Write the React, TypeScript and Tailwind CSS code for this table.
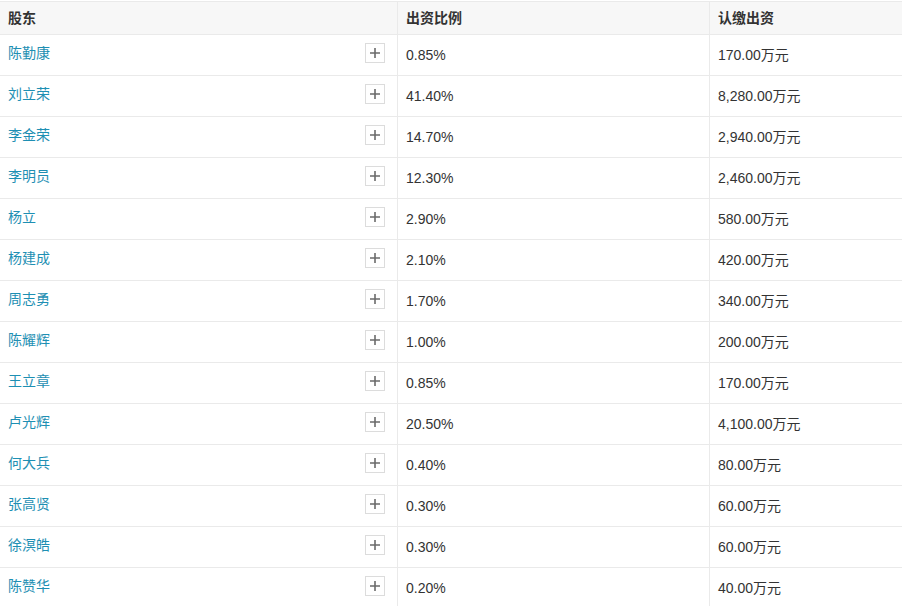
import React from "react";

const rows: [string, string, string][] = [
  ["陈勤康", "0.85%", "170.00万元"],
  ["刘立荣", "41.40%", "8,280.00万元"],
  ["李金荣", "14.70%", "2,940.00万元"],
  ["李明员", "12.30%", "2,460.00万元"],
  ["杨立", "2.90%", "580.00万元"],
  ["杨建成", "2.10%", "420.00万元"],
  ["周志勇", "1.70%", "340.00万元"],
  ["陈耀辉", "1.00%", "200.00万元"],
  ["王立章", "0.85%", "170.00万元"],
  ["卢光辉", "20.50%", "4,100.00万元"],
  ["何大兵", "0.40%", "80.00万元"],
  ["张高贤", "0.30%", "60.00万元"],
  ["徐溟皓", "0.30%", "60.00万元"],
  ["陈赞华", "0.20%", "40.00万元"],
];

const font = { fontFamily: '"Liberation Sans", "Noto Sans CJK SC", sans-serif' };

function PlusBox() {
  return (
    <div className="w-5 h-5 border border-[#dcdcdc] bg-white flex items-center justify-center">
      <svg width="12" height="12" viewBox="0 0 12 12">
        <path d="M6 1v10M1 6h10" stroke="#6b6b6b" strokeWidth="1.6" />
      </svg>
    </div>
  );
}

export default function App() {
  return (
    <div className="w-[902px] h-[606px] bg-white overflow-hidden pt-px text-[14px] text-[#333]" style={font}>
      <div className="grid grid-cols-[398px_312px_1fr] h-[34px] bg-[#f7f7f7] border-t border-b border-[#eaeaea]">
        <div className="border-r border-[#eaeaea] flex items-center pl-2 font-semibold text-[#333]">股东</div>
        <div className="border-r border-[#eaeaea] flex items-center pl-2 font-semibold text-[#333]">出资比例</div>
        <div className="flex items-center pl-2 font-semibold text-[#333]">认缴出资</div>
      </div>
      {rows.map(([n, p, v]) => (
        <div key={n + p} className="grid grid-cols-[398px_312px_1fr] h-[41px] border-b border-[#eaeaea]">
          <div className="border-r border-[#eaeaea] flex items-center justify-between pl-2 pr-3 pb-1">
            <span className="text-[#1e8fb3]">{n}</span>
            <PlusBox />
          </div>
          <div className="border-r border-[#eaeaea] flex items-center pl-2 pt-px">{p}</div>
          <div className="flex items-center pl-2 pt-px">{v}</div>
        </div>
      ))}
    </div>
  );
}
